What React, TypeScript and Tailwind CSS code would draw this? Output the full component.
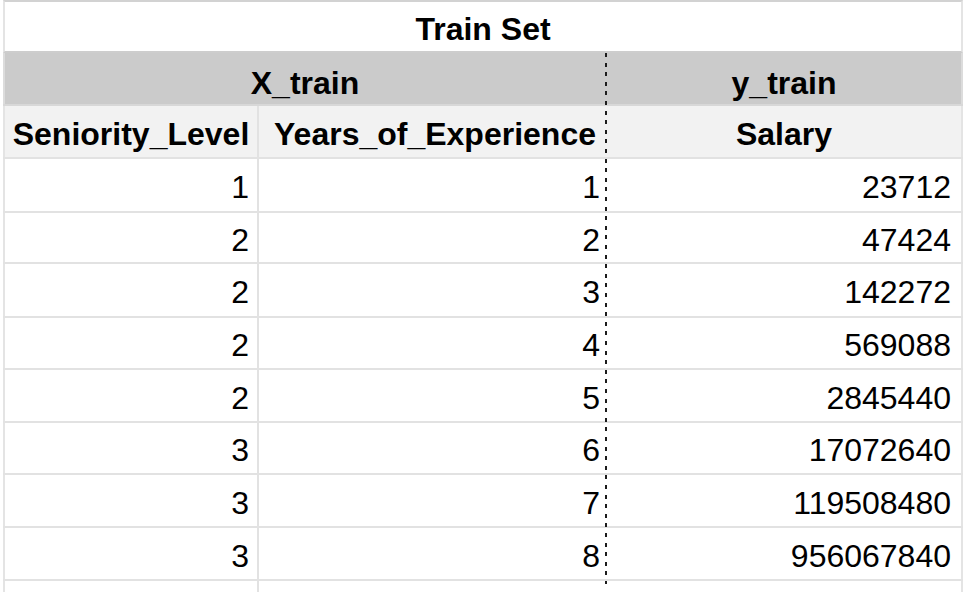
import React from "react";

const rows: [string, string, string][] = [
  ["1", "1", "23712"],
  ["2", "2", "47424"],
  ["2", "3", "142272"],
  ["2", "4", "569088"],
  ["2", "5", "2845440"],
  ["3", "6", "17072640"],
  ["3", "7", "119508480"],
  ["3", "8", "956067840"],
];

const rowHeights = [
  "h-[54px]",
  "h-[51px]",
  "h-[54px]",
  "h-[52px]",
  "h-[53px]",
  "h-[52px]",
  "h-[53px]",
  "h-[53px]",
];

export default function App() {
  return (
    <div
      className="relative w-[968px] h-[592px] bg-white overflow-hidden text-black"
      style={{ fontFamily: '"Liberation Sans", Arial, sans-serif' }}
    >
      <div className="ml-[3px] w-[960px] flex flex-col text-[32px] leading-[37px]">
        {/* Title row */}
        <div className="h-[53px] flex border-t-2 border-b-2 border-l-2 border-r-2 border-t-[#d2d2d2] border-b-[#cdcdcd] border-l-[#e4e4e4] border-r-[#e4e4e4] bg-white">
          <div className="flex-1 flex items-center justify-center pt-[5px] font-bold">
            Train Set
          </div>
        </div>
        {/* Group row */}
        <div className="h-[53px] flex border-b-2 border-b-[#d8d8d8] bg-[#cbcbcb]">
          <div className="w-[604px] flex items-center justify-center pt-[9px] font-bold border-l-2 border-l-[#dcdcdc] border-r-2 border-r-transparent">
            X_train
          </div>
          <div className="w-[356px] flex items-center justify-center pt-[9px] font-bold border-r-2 border-r-[#dcdcdc]">
            y_train
          </div>
        </div>
        {/* Header row */}
        <div className="h-[53px] flex border-b-2 border-b-[#e2e2e2] bg-[#f2f2f2]">
          <div className="w-[256px] flex items-center justify-center pt-[6px] font-bold border-l-2 border-l-[#e4e4e4] border-r-2 border-r-[#e2e2e2]">
            Seniority_Level
          </div>
          <div className="w-[348px] flex items-center justify-center pt-[6px] pl-[6px] font-bold border-r-2 border-r-transparent whitespace-nowrap">
            Years_of_Experience
          </div>
          <div className="w-[356px] flex items-center justify-center pt-[6px] font-bold border-r-2 border-r-[#e4e4e4]">
            Salary
          </div>
        </div>
        {/* Data rows */}
        {rows.map((r, i) => (
          <div
            key={i}
            className={`${rowHeights[i]} flex border-b-2 border-b-[#e2e2e2] bg-white`}
          >
            <div className="w-[256px] flex items-center justify-end pt-[5px] pr-[8px] border-l-2 border-l-[#e4e4e4] border-r-2 border-r-[#e2e2e2]">
              {r[0]}
            </div>
            <div className="w-[348px] flex items-center justify-end pt-[5px] pr-[5px] border-r-2 border-r-transparent">
              {r[1]}
            </div>
            <div className="w-[356px] flex items-center justify-end pt-[5px] pr-[10px] border-r-2 border-r-[#e4e4e4]">
              {r[2]}
            </div>
          </div>
        ))}
        {/* Trailing stub below table */}
        <div className="h-[12px] flex">
          <div className="w-[256px] border-l-2 border-l-[#e4e4e4] border-r-2 border-r-[#e2e2e2]" />
          <div className="w-[348px]" />
          <div className="w-[356px] border-r-2 border-r-[#e4e4e4]" />
        </div>
      </div>
      {/* Dotted separator between X_train and y_train */}
      <div className="absolute left-[605px] top-[53px] w-[2px] h-[531px] bg-[repeating-linear-gradient(to_bottom,#1c1c1c_0px,#1c1c1c_4px,transparent_4px,transparent_9.6px)]" />
    </div>
  );
}
